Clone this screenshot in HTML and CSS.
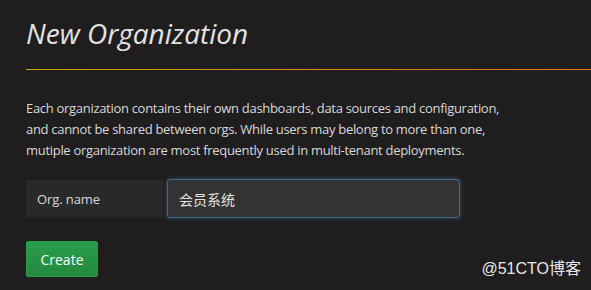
FILE: index.html
```html
<!DOCTYPE html>
<html lang="en">
<head>
    <meta charset="UTF-8">
    <meta name="viewport" content="width=device-width, initial-scale=1.0">
    <title>New Organization</title>
    <link rel="stylesheet" href="styles.css">
</head>
<body>
    <div class="page">
        <div class="page-header">
            <h1>New Organization</h1>
        </div>
        <p class="intro">
            Each organization contains their own dashboards, data sources and configuration,<br>
            and cannot be shared between orgs. While users may belong to more than one,<br>
            mutiple organization are most frequently used in multi-tenant deployments.
        </p>
        <form class="org-form">
            <div class="form-row">
                <label for="orgName" class="form-label">Org. name</label>
                <input type="text" id="orgName" class="form-input" value="会员系统">
            </div>
            <button type="submit" class="btn-create">Create</button>
        </form>
    </div>
    <div class="watermark">@51CTO博客</div>
</body>
</html>
```

FILE: styles.css
```css
body {
    font-family: 'Open Sans', 'Noto Sans CJK SC', sans-serif;
    background-color: #1f1d1e;
    color: #d8d9da;
    margin: 0;
    padding: 0;
    height: 290px;
    overflow: hidden;
    position: relative;
}

.page {
    padding: 14px 0 0 26px;
}

.page-header {
    border-bottom: 1px solid;
    border-image: linear-gradient(to right, #c9a20f 0%, #e2730d 100%) 1;
    padding-bottom: 17px;
}

.page-header h1 {
    margin: 0;
    font-size: 28px;
    font-weight: 400;
    font-style: italic;
    line-height: 38px;
    color: #e3e3e3;
}

.intro {
    margin: 28px 0 0 0;
    font-size: 13px;
    letter-spacing: -0.3px;
    line-height: 21px;
}

.org-form {
    margin-top: 19px;
}

.form-row {
    display: flex;
    gap: 4px;
    height: 37px;
}

.form-label {
    width: 126px;
    padding-left: 11px;
    background-color: #292929;
    font-size: 13px;
    letter-spacing: -0.1px;
    display: flex;
    align-items: center;
    color: #d8d9da;
}

.form-input {
    width: 293px;
    margin-top: -1px;
    height: 39px;
    box-sizing: border-box;
    padding: 0 11px;
    background-color: #333333;
    border: 1px solid #3d6a8c;
    border-radius: 3px;
    box-shadow: 0 0 5px rgba(82, 148, 200, 0.45);
    color: #e3e3e3;
    font-family: 'Open Sans', 'Noto Sans CJK SC', sans-serif;
    font-size: 14px;
    outline: none;
}

.btn-create {
    margin-top: 24px;
    width: 72px;
    height: 36px;
    background: linear-gradient(to bottom, #2a9e4a, #24893e);
    border: 1px solid #2b9a48;
    border-radius: 2px;
    color: #ffffff;
    font-family: 'Open Sans', sans-serif;
    font-size: 14px;
    cursor: pointer;
}

.watermark {
    position: absolute;
    right: 10px;
    bottom: 11px;
    font-family: 'Liberation Sans', 'Noto Sans CJK SC', sans-serif;
    font-size: 16px;
    color: #e8e8e8;
}
```
